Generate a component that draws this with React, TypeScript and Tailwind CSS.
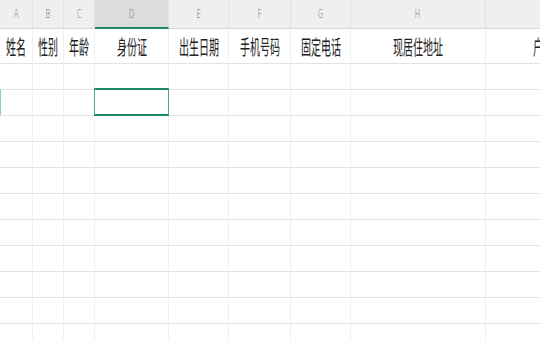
import React from "react";

const cols = [
  { l: "A", w: "w-[33px]", t: "姓名" },
  { l: "B", w: "w-[31px]", t: "性别" },
  { l: "C", w: "w-[31px]", t: "年龄" },
  { l: "D", w: "w-[74px]", t: "身份证", sel: true },
  { l: "E", w: "w-[60px]", t: "出生日期" },
  { l: "F", w: "w-[62px]", t: "手机号码" },
  { l: "G", w: "w-[60px]", t: "固定电话" },
  { l: "H", w: "w-[135px]", t: "现居住地址" },
  { l: "I", w: "w-[134px]", t: "户籍地址" },
];

const rows = Array.from({ length: 12 }, (_, i) => i);

export default function App() {
  return (
    <div className="relative w-[540px] h-[340px] overflow-hidden bg-white font-['Noto_Sans_CJK_SC',sans-serif]">
      <div className="flex w-max">
        {cols.map((c) => (
          <div
            key={c.l}
            className={`${c.w} shrink-0 h-[29px] flex items-center justify-center border-r border-r-[#e2e2e2] ${
              c.sel ? "bg-[#dddddd] border-b-2 border-b-[#1f8a60]" : "bg-[#efefef] border-b border-b-[#d8d8d8]"
            }`}
          >
            <span className="inline-block scale-x-[0.6] text-[12px] leading-none text-[#6b6b6b] font-['DejaVu_Sans',sans-serif] font-light">
              {c.l}
            </span>
          </div>
        ))}
      </div>
      <div className="flex w-max">
        {cols.map((c) => (
          <div
            key={c.l}
            className={`${c.w} shrink-0 h-[35px] flex items-center justify-center border-r border-r-[#f0f0f0] border-b border-b-[#e3e3e3] overflow-visible whitespace-nowrap`}
          >
            <span className="inline-block scale-x-[0.5] text-[20px] leading-none text-[#222222] pt-[2px]">
              {c.t}
            </span>
          </div>
        ))}
      </div>
      {rows.map((r) => (
        <div key={r} className="flex w-max">
          {cols.map((c) => (
            <div
              key={c.l}
              className={`${c.w} shrink-0 h-[26px] border-r border-r-[#f0f0f0] border-b border-b-[#e3e3e3]`}
            />
          ))}
        </div>
      ))}
      <div className="absolute left-0 top-[89px] w-[1px] h-[26px] bg-[#8fcfb4]" />
      <div className="absolute left-[94px] top-[88px] w-[75px] h-[28px] border-y-2 border-y-[#1f8a60] border-x border-x-[#4fa882]" />
    </div>
  );
}
